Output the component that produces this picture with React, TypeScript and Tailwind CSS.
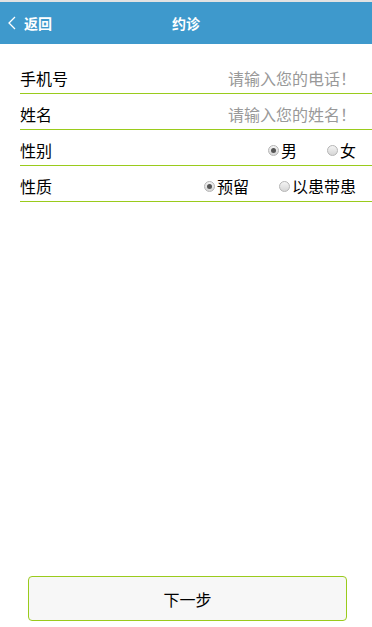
import { useState } from "react";

type Option = { value: string; label: string };

function Radio({
  checked,
  label,
  onClick,
}: {
  checked: boolean;
  label: string;
  onClick: () => void;
}) {
  return (
    <label onClick={onClick} className="flex cursor-pointer items-center gap-[2px]">
      <span className="flex h-[11px] w-[11px] items-center justify-center rounded-full border border-[#b5b5b5] bg-gradient-to-b from-[#f4f4f4] to-[#d6d6d6]">
        {checked && <span className="h-[5px] w-[5px] rounded-full bg-[#555]" />}
      </span>
      <span className="text-[16px] leading-[20px] text-black">{label}</span>
    </label>
  );
}

function Row({ label, children }: { label: string; children: React.ReactNode }) {
  return (
    <div className="flex h-[36px] items-start border-b border-[#9acb1c] pt-[10px] pr-[16px]">
      <span className="w-[80px] shrink-0 text-[16px] leading-[20px] text-black">{label}</span>
      <div className="flex flex-1 justify-end">{children}</div>
    </div>
  );
}

function RadioGroup({ options, initial }: { options: Option[]; initial: string }) {
  const [value, setValue] = useState(initial);
  return (
    <div className="flex items-center gap-[30px]">
      {options.map((o) => (
        <Radio key={o.value} label={o.label} checked={value === o.value} onClick={() => setValue(o.value)} />
      ))}
    </div>
  );
}

export default function App() {
  return (
    <div
      className="flex h-[627px] w-[372px] flex-col bg-white"
      style={{ fontFamily: '"Noto Sans CJK SC", "Liberation Sans", sans-serif' }}
    >
      {/* top strip + header */}
      <div className="h-[2px] bg-[#e2e2e2]" />
      <header className="relative flex h-[42px] items-center bg-[#3e99cc] text-white">
        <button className="flex items-center gap-[8px] pl-[8px]">
          <svg width="8" height="14" viewBox="0 0 8 14" fill="none">
            <path d="M7 1L1 7l6 6" stroke="white" strokeWidth="1.3" />
          </svg>
          <span className="text-[14px] font-bold leading-none">返回</span>
        </button>
        <h1 className="absolute left-1/2 -translate-x-1/2 text-[14px] font-bold leading-none">约诊</h1>
      </header>

      {/* form */}
      <div className="mt-[14px] pl-[20px]">
        <Row label="手机号">
          <input
            type="tel"
            placeholder="请输入您的电话！"
            className="w-[200px] bg-transparent text-right text-[16px] leading-[20px] text-black outline-none placeholder:text-[#999]"
          />
        </Row>
        <Row label="姓名">
          <input
            type="text"
            placeholder="请输入您的姓名！"
            className="w-[200px] bg-transparent text-right text-[16px] leading-[20px] text-black outline-none placeholder:text-[#999]"
          />
        </Row>
        <Row label="性别">
          <RadioGroup
            initial="m"
            options={[
              { value: "m", label: "男" },
              { value: "f", label: "女" },
            ]}
          />
        </Row>
        <Row label="性质">
          <RadioGroup
            initial="a"
            options={[
              { value: "a", label: "预留" },
              { value: "b", label: "以患带患" },
            ]}
          />
        </Row>
      </div>

      {/* next button */}
      <div className="mt-auto mb-[6px] pl-[28px]">
        <button className="h-[45px] w-[319px] rounded-[4px] border border-[#9acb1c] bg-[#f7f7f7] text-[16px] text-black">
          下一步
        </button>
      </div>
    </div>
  );
}
